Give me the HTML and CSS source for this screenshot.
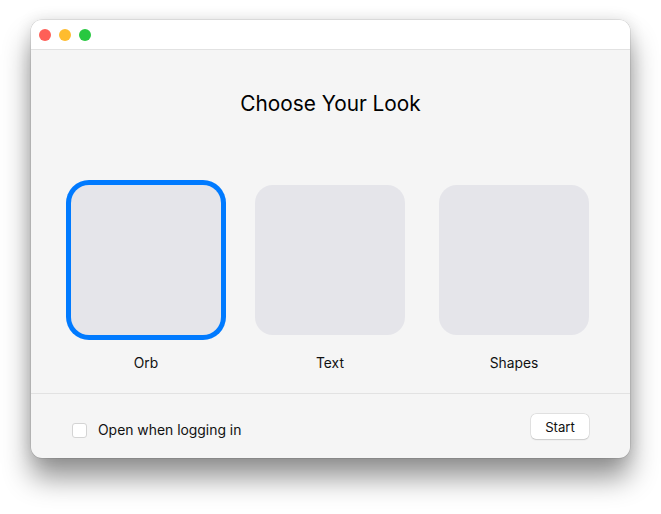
FILE: index.html
```html
<!DOCTYPE html>
<html>
<head>
<meta charset="utf-8">
<link rel="stylesheet" href="styles.css">
</head>
<body>
<div class="stage">
  <div class="window">
    <div class="titlebar">
      <span class="light red"></span>
      <span class="light yellow"></span>
      <span class="light green"></span>
    </div>
    <div class="content">
      <h1 class="title">Choose Your Look</h1>
      <div class="options">
        <div class="option">
          <div class="tile selected"></div>
          <div class="label">Orb</div>
        </div>
        <div class="option">
          <div class="tile"></div>
          <div class="label">Text</div>
        </div>
        <div class="option">
          <div class="tile"></div>
          <div class="label">Shapes</div>
        </div>
      </div>
    </div>
    <div class="footer">
      <label class="check">
        <span class="box"></span>
        <span class="check-text">Open when logging in</span>
      </label>
      <button class="start">Start</button>
    </div>
  </div>
</div>
</body>
</html>
```

FILE: styles.css
```css
html, body {
  margin: 0;
  padding: 0;
  background: #ffffff;
}
body {
  font-family: Inter, "Liberation Sans", sans-serif;
  color: #1d1d1f;
}
.stage {
  padding: 20px 0 0 31px;
  height: 514px;
  box-sizing: border-box;
}
.window {
  width: 599px;
  height: 438px;
  background: #f5f5f5;
  border-radius: 11px;
  box-shadow: 0 0 0 0.5px rgba(0,0,0,0.14), 0 20px 28px rgba(0,0,0,0.42), 0 0 16px rgba(0,0,0,0.12);
  overflow: hidden;
  display: flex;
  flex-direction: column;
}
.titlebar {
  height: 29px;
  background: #ffffff;
  border-bottom: 1px solid #e2e2e2;
  display: flex;
  align-items: center;
  gap: 8px;
  padding-left: 8px;
  box-sizing: content-box;
}
.light {
  width: 12px;
  height: 12px;
  border-radius: 50%;
}
.red { background: #fe5f57; }
.yellow { background: #febc2e; }
.green { background: #28c840; }
.content {
  flex: 1;
  border-bottom: 1px solid #e2e2e2;
}
.title {
  margin: 0;
  padding-top: 42px;
  font-size: 20.8px;
  line-height: 24px;
  font-weight: 400;
  text-align: center;
  color: #000;
}
.options {
  display: flex;
  gap: 34px;
  padding: 69px 41px 0 40px;
}
.option {
  width: 150px;
  display: flex;
  flex-direction: column;
  align-items: center;
}
.tile {
  width: 150px;
  height: 150px;
  border-radius: 18px;
  background: #e5e5ea;
}
.tile.selected {
  box-shadow: 0 0 0 5px #007aff;
}
.label {
  margin-top: 20px;
  font-size: 13.8px;
  line-height: 16px;
  color: #111;
}
.footer {
  height: 64px;
  display: flex;
  align-items: center;
  justify-content: space-between;
  padding: 0 41px;
}
.check {
  display: flex;
  align-items: center;
  gap: 11px;
  margin-top: 8px;
}
.box {
  width: 13px;
  height: 13px;
  background: #fff;
  border: 1px solid #d4d4d4;
  border-radius: 3px;
}
.check-text {
  font-size: 13.9px;
  line-height: 16px;
  color: #111;
}
.start {
  width: 58px;
  height: 25px;
  border: none;
  border-radius: 5px;
  background: #fff;
  box-shadow: 0 0 0 0.5px rgba(0,0,0,0.12), 0 0.5px 1.5px rgba(0,0,0,0.12);
  font-family: Inter, "Liberation Sans", sans-serif;
  font-size: 13.2px;
  color: #111;
  padding: 0;
  margin-top: 1px;
}
```
